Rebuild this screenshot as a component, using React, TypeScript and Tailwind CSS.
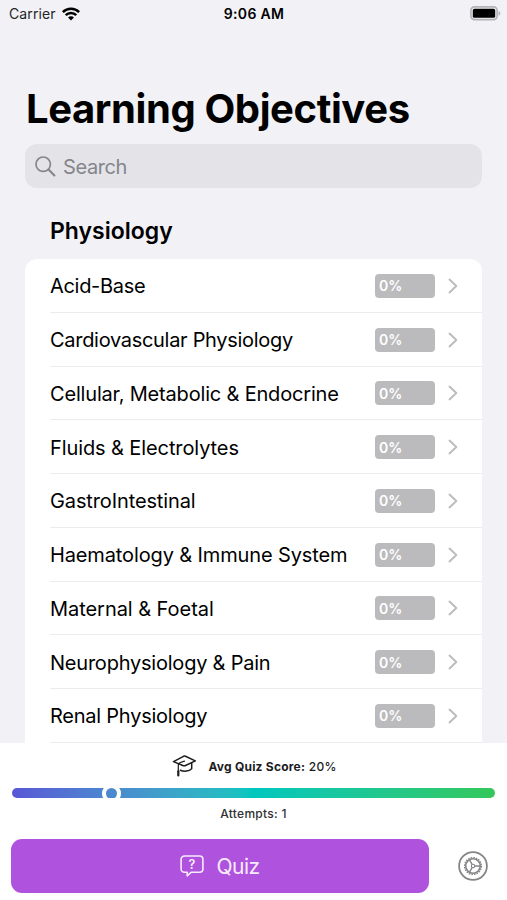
import { clsx } from 'clsx'

interface Topic {
  name: string
  score: number
  spacing: string
}

const topics: Topic[] = [
  { name: 'Acid-Base', score: 0, spacing: 'tracking-[-0.3px]' },
  { name: 'Cardiovascular Physiology', score: 0, spacing: 'tracking-[-0.3px]' },
  { name: 'Cellular, Metabolic & Endocrine', score: 0, spacing: 'tracking-[-0.18px]' },
  { name: 'Fluids & Electrolytes', score: 0, spacing: 'tracking-[-0.1px]' },
  { name: 'GastroIntestinal', score: 0, spacing: 'tracking-[-0.12px]' },
  { name: 'Haematology & Immune System', score: 0, spacing: 'tracking-[-0.13px]' },
  { name: 'Maternal & Foetal', score: 0, spacing: 'tracking-[-0.05px]' },
  { name: 'Neurophysiology & Pain', score: 0, spacing: 'tracking-[-0.22px]' },
  { name: 'Renal Physiology', score: 0, spacing: 'tracking-[-0.24px]' },
]

function WifiIcon() {
  return (
    <svg width="18" height="14" viewBox="0 0 19 14.5" fill="none" stroke="black" strokeWidth="2.6">
      <path d="M0.9 5.2a12.2 12.2 0 0 1 17.2 0" />
      <path d="M3.9 8.5a8 8 0 0 1 11.2 0" />
      <path d="M9.5 14.2 6.4 11a4.3 4.3 0 0 1 6.2 0z" fill="black" stroke="none" />
    </svg>
  )
}

function BatteryIcon() {
  return (
    <svg width="31" height="15" viewBox="0 0 31 15">
      <rect x="0.9" y="0.9" width="26.2" height="12.8" rx="3.6" fill="none" stroke="#b4b4b6" strokeWidth="1.7" />
      <rect x="2.8" y="2.8" width="22.4" height="9" rx="1.6" fill="black" />
      <path d="M28.6 4.9c2.2.9 2.2 3.9 0 4.8z" fill="#aeaeb0" />
    </svg>
  )
}

function SearchIcon() {
  return (
    <svg width="21" height="21" viewBox="0 0 21 21" fill="none" stroke="#85858b" strokeLinecap="round">
      <circle cx="8.2" cy="8.2" r="7.2" strokeWidth="1.7" />
      <path d="m13.6 13.6 5.8 5.8" strokeWidth="2.1" />
    </svg>
  )
}

function ChevronIcon() {
  return (
    <svg className="mr-[24px] ml-[13px]" width="10" height="16" viewBox="0 0 10 16" fill="none">
      <path d="m1.5 1.6 6.8 6.4-6.8 6.4" stroke="#bdbdc0" strokeWidth="2" strokeLinecap="round" strokeLinejoin="round" />
    </svg>
  )
}

function GraduationIcon() {
  return (
    <svg width="25" height="22" viewBox="0 0 25 22" fill="none" stroke="#1c1c1e" strokeWidth="1.5" strokeLinejoin="round" strokeLinecap="round">
      <path d="M1.5 6.6 11.5 1.3q1-.4 2 0l9.800 4.600-10.300 4.800q-.8.300-1.600 0z" />
      <path d="M12.500 6.100Q7 7.300 6.300 10v7" strokeWidth="1.200" />
      <path d="M8.400 15.200c3.600 1.600 8.500 1.200 11.300-1.400V8.200" />
      <path d="M6.300 16.300v4.100" strokeWidth="2.200" />
    </svg>
  )
}

function QuestionBubbleIcon() {
  return (
    <svg width="24" height="22" viewBox="0 0 24 22">
      <path
        d="M4.4 1h15.2a3.3 3.3 0 0 1 3.3 3.3v9.6a3.3 3.3 0 0 1-3.3 3.3h-8.3l-4.1 3.6v-3.6H4.4a3.3 3.3 0 0 1-3.3-3.3V4.3A3.3 3.3 0 0 1 4.4 1z"
        fill="none"
        stroke="#f8ecfc"
        strokeWidth="1.6"
        strokeLinejoin="round"
      />
      <text x="12" y="13.7" textAnchor="middle" fill="#f8ecfc" fontSize="12.5" fontWeight="600" fontFamily="Inter, sans-serif">
        ?
      </text>
    </svg>
  )
}

function SettingsIcon() {
  return (
    <svg width="30" height="30" viewBox="0 0 30 30" fill="none" stroke="#858587">
      <circle cx="15" cy="15" r="13.9" strokeWidth="1.8" />
      <circle cx="15" cy="15" r="8.5" strokeWidth="1.2" strokeDasharray="1.6 1.067" />
      <circle cx="15" cy="15" r="7.3" strokeWidth="1.6" />
      <circle cx="15" cy="15" r="1.7" strokeWidth="1.1" />
      <path d="M16.8 15h5.8M14.1 13.4l-2.9-5M14.1 16.6l-2.9 5" strokeWidth="1.4" />
    </svg>
  )
}

function ScoreBadge({ score }: { score: number }) {
  return (
    <div className="flex h-[24px] w-[60px] items-center rounded-[4px] bg-[#bbbbbd] pl-[4px] text-[14px] font-semibold text-white">
      {score}%
    </div>
  )
}

export default function App() {
  return (
    <div className="flex h-[900px] w-[507px] flex-col overflow-hidden bg-[#f1f1f6] font-['Inter',sans-serif] text-black">
      <header className="flex h-[27px] shrink-0 items-center pr-[6px] pl-[9px] text-[14px]">
        <div className="flex flex-1 items-center gap-[6px] text-[#252527]">
          <span className="tracking-[0.1px]">Carrier</span>
          <WifiIcon />
        </div>
        <span className="pr-[2px] text-center font-semibold tracking-[0.3px]">9:06 AM</span>
        <div className="flex flex-1 justify-end">
          <BatteryIcon />
        </div>
      </header>

      <main className="flex min-h-0 flex-1 flex-col overflow-hidden px-[25px]">
        <h1 className="mt-[58px] h-[48px] pl-px text-[40px] leading-[48px] font-bold tracking-[-0.4px] whitespace-nowrap">
          Learning Objectives
        </h1>
        <div className="mt-[11px] flex h-[44px] shrink-0 items-center gap-[7px] rounded-[12px] bg-[#e3e3e8] pl-[10px] text-[20px] text-[#85858b]">
          <SearchIcon />
          <span className="pt-px tracking-[-0.4px]">Search</span>
        </div>
        <h2 className="mt-[28px] h-[30px] shrink-0 pl-[25px] text-[23px] leading-[30px] font-semibold">Physiology</h2>
        <ul className="mt-[13px] shrink-0 rounded-t-[12px] bg-white pl-[25px]">
          {topics.map((topic) => (
            <li key={topic.name} className="flex h-[53.75px] items-center border-b-[1.5px] border-[#ececee] pt-px">
              <span className={clsx('flex-1 pt-px text-[20px] whitespace-nowrap', topic.spacing)}>{topic.name}</span>
              <ScoreBadge score={topic.score} />
              <ChevronIcon />
            </li>
          ))}
        </ul>
      </main>

      <footer className="flex h-[157px] shrink-0 flex-col bg-white">
        <div className="mt-[11px] flex h-[24px] items-center justify-center gap-[11px] pl-[2px] text-[12px] text-[#1c1c1e]">
          <GraduationIcon />
          <span className="pt-px tracking-[0.23px]">
            <b className="font-bold">Avg Quiz Score:</b> <span className="font-medium">20%</span>
          </span>
        </div>
        <div className="relative mx-[12px] mt-[10px] h-[10px] shrink-0 rounded-full bg-linear-to-r from-[#5856d6] via-[#00c7be] to-[#34c759]">
          <div className="absolute top-0 left-[90px] flex h-[10px] w-[19px] items-center justify-center overflow-hidden">
            <div className="h-[19px] w-[19px] shrink-0 rounded-full border-[4.5px] border-white" />
          </div>
        </div>
        <div className="mt-[7px] h-[18px] text-center text-[12px] leading-[18px] font-medium tracking-[0.3px] text-[#303032]">
          Attempts: 1
        </div>
        <div className="mt-[16px] flex items-center pl-[11px]">
          <button className="flex h-[54px] w-[418px] items-center justify-center gap-[12px] rounded-[11px] bg-[#af52de] text-[21px] text-[#f8ecfc]">
            <QuestionBubbleIcon />
            <span className="pt-px tracking-[-0.5px]">Quiz</span>
          </button>
          <button className="ml-[29px]" aria-label="Settings">
            <SettingsIcon />
          </button>
        </div>
      </footer>
    </div>
  )
}
